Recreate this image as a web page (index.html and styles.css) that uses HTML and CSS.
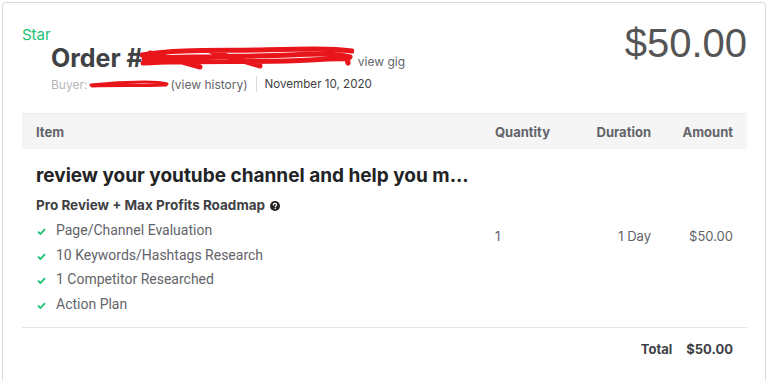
FILE: index.html
```html
<!DOCTYPE html>
<html>

<head>
    <title>Order Details</title>
    <link rel="stylesheet" href="styles.css">
</head>

<body>
    <div class="card">
        <div class="order-header">
            <div class="order-info">
                <div class="status">Star</div>
                <div class="order-title">
                    <h1>Order #</h1>
                    <svg class="scribble scribble-lg" width="214" height="26" viewBox="0 0 214 26">
                        <path d="M2 10 C40 4, 80 6, 120 5 S190 3, 212 6 M4 14 C50 10, 110 12, 150 10 S200 9, 210 12 M3 18 C60 15, 120 18, 170 15 S205 15, 208 18 M10 8 L60 22 M70 6 L120 21" fill="none" stroke="#e8151b" stroke-width="5" stroke-linecap="round"/>
                    </svg>
                    <a class="view-gig" href="#">view gig</a>
                </div>
                <div class="buyer-line">
                    <span class="buyer-label">Buyer:</span>
                    <svg class="scribble" width="80" height="10" viewBox="0 0 80 10">
                        <path d="M2 6 C20 4, 40 3, 55 3 S75 4, 78 5 M3 7 C25 6, 50 7, 77 6" fill="none" stroke="#e8151b" stroke-width="3" stroke-linecap="round"/>
                    </svg>
                    <a class="view-history" href="#">(view history)</a>
                    <span class="divider"></span>
                    <span class="order-date">November 10, 2020</span>
                </div>
            </div>
            <div class="order-price">$50.00</div>
        </div>

        <table class="order-table">
            <colgroup>
                <col class="w-item">
                <col class="w-qty">
                <col class="w-duration">
                <col class="w-amount">
            </colgroup>
            <thead>
                <tr>
                    <th class="col-item">Item</th>
                    <th class="col-qty">Quantity</th>
                    <th class="col-duration">Duration</th>
                    <th class="col-amount">Amount</th>
                </tr>
            </thead>
            <tbody>
                <tr>
                    <td class="col-item">
                        <div class="gig-title">review your youtube channel and help you m...</div>
                        <div class="package-name">
                            Pro Review + Max Profits Roadmap
                            <svg class="help-icon" width="10" height="10" viewBox="0 0 10 10">
                                <circle cx="5" cy="5" r="5" fill="#222325"/>
                                <path d="M3.4 3.9 C3.4 2.9 4.1 2.4 5 2.4 C5.9 2.4 6.6 2.9 6.6 3.8 C6.6 4.8 5.4 4.9 5.3 5.9" fill="none" stroke="#fff" stroke-width="1.3" stroke-linecap="round"/>
                                <circle cx="5.2" cy="7.6" r="0.75" fill="#fff"/>
                            </svg>
                        </div>
                        <ul class="features">
                            <li><svg class="check" width="9" height="7" viewBox="0 0 9 7"><path d="M1 3.6 L3.4 6 L8 1.2" fill="none" stroke="#1dbf73" stroke-width="1.8"/></svg>Page/Channel Evaluation</li>
                            <li><svg class="check" width="9" height="7" viewBox="0 0 9 7"><path d="M1 3.6 L3.4 6 L8 1.2" fill="none" stroke="#1dbf73" stroke-width="1.8"/></svg>10 Keywords/Hashtags Research</li>
                            <li><svg class="check" width="9" height="7" viewBox="0 0 9 7"><path d="M1 3.6 L3.4 6 L8 1.2" fill="none" stroke="#1dbf73" stroke-width="1.8"/></svg>1 Competitor Researched</li>
                            <li><svg class="check" width="9" height="7" viewBox="0 0 9 7"><path d="M1 3.6 L3.4 6 L8 1.2" fill="none" stroke="#1dbf73" stroke-width="1.8"/></svg>Action Plan</li>
                        </ul>
                    </td>
                    <td class="col-qty cell-value">1</td>
                    <td class="col-duration cell-value">1 Day</td>
                    <td class="col-amount cell-value">$50.00</td>
                </tr>
            </tbody>
            <tfoot>
                <tr>
                    <td colspan="4" class="total-cell">
                        <div class="total-row">
                            <span>Total</span>
                            <span>$50.00</span>
                        </div>
                    </td>
                </tr>
            </tfoot>
        </table>
    </div>
</body>

</html>
```

FILE: styles.css
```css
body {
    margin: 0;
    padding: 2px 2px 0 2px;
    font-family: Inter, Roboto, "Liberation Sans", sans-serif;
    color: #62646a;
    background: #fff;
}

.card {
    border: 1px solid #dadbdd;
    border-bottom: none;
    border-radius: 4px 4px 0 0;
    padding: 0 18px 0 19px;
    min-height: 400px;
}

.order-header {
    display: flex;
    justify-content: space-between;
    align-items: flex-start;
    height: 110px;
}

.order-info {
    padding-top: 24px;
}

.status {
    color: #1dbf73;
    font-size: 15px;
    line-height: 16px;
}

.order-title {
    display: flex;
    align-items: flex-end;
    margin-left: 29px;
    height: 30px;
}

.order-title h1 {
    margin: 0;
    font-size: 25px;
    line-height: 30px;
    font-weight: 700;
    color: #404145;
}

.scribble {
    display: inline-block;
}

.scribble-lg {
    margin: 0 0 2px -3px;
}

.view-gig {
    font-size: 12px;
    color: #62646a;
    text-decoration: none;
    margin: 0 0 4px 4px;
}

.buyer-line {
    display: flex;
    align-items: center;
    margin: 2px 0 0 29px;
    font-size: 12px;
    height: 18px;
}

.buyer-label {
    color: #b5b6ba;
    margin-right: 2px;
}

.view-history {
    color: #62646a;
    text-decoration: none;
    margin-left: 1px;
}

.divider {
    width: 1px;
    height: 16px;
    background: #dadbdd;
    margin: 0 8px;
}

.order-date {
    color: #404145;
    font-size: 11.6px;
}

.order-price {
    font-family: "Liberation Sans", Arial, sans-serif;
    font-size: 40px;
    color: #555;
    padding-top: 18px;
}

.order-table {
    width: 100%;
    border-collapse: collapse;
    table-layout: fixed;
}

.w-item {
    width: 459px;
}

.w-qty {
    width: 101px;
}

.w-duration {
    width: 83px;
}

.w-amount {
    width: 82px;
}

.order-table th {
    background: #f5f5f5;
    border-top: 1px solid #ececec;
    font-size: 13px;
    font-weight: 700;
    color: #62646a;
    height: 35px;
    padding: 0 14px;
    text-align: left;
}

.order-table td {
    font-size: 13px;
    color: #62646a;
    vertical-align: middle;
    padding: 0 14px;
}

.order-table tbody td {
    border-bottom: 1px solid #e4e5e7;
    padding-top: 15px;
    padding-bottom: 11px;
}

.order-table tbody .cell-value {
    padding-top: 11px;
    padding-bottom: 15px;
}

.order-table .col-item {
    white-space: nowrap;
}

.order-table .col-duration,
.order-table .col-amount {
    text-align: right;
}

.gig-title {
    font-size: 19px;
    font-weight: 700;
    color: #222325;
    line-height: 24px;
}

.package-name {
    font-size: 13.5px;
    font-weight: 700;
    color: #404145;
    margin-top: 8px;
    line-height: 18px;
}

.help-icon {
    vertical-align: -1px;
    margin-left: 2px;
}

.features {
    list-style: none;
    margin: 4px 0 0 0;
    padding: 0;
}

.features li {
    font-family: Roboto, "Liberation Sans", sans-serif;
    font-size: 14px;
    line-height: 24.5px;
    color: #62646a;
}

.check {
    margin: 0 10px 0 1px;
    vertical-align: 0;
}

.total-cell {
    height: 44px;
}

.total-row {
    display: flex;
    justify-content: flex-end;
    gap: 14px;
    font-weight: 700;
    color: #404145;
    padding-bottom: 2px;
}
```
